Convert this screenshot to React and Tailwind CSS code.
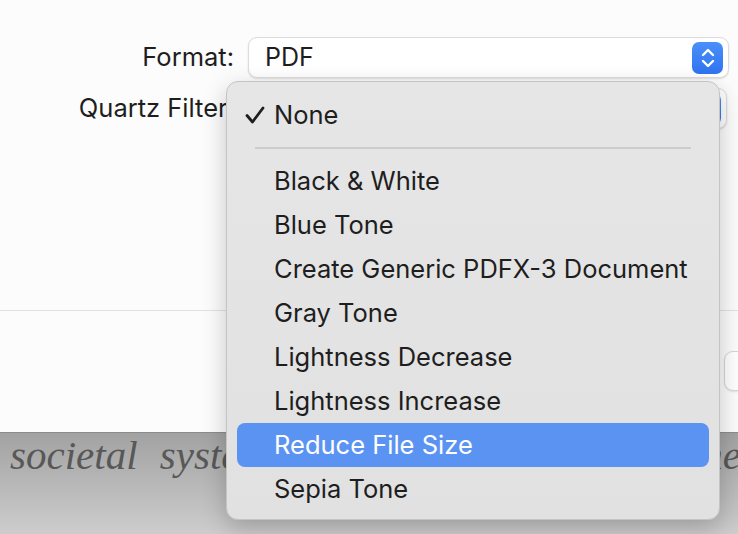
const items = [
  'Black & White',
  'Blue Tone',
  'Create Generic PDFX-3 Document',
  'Gray Tone',
  'Lightness Decrease',
  'Lightness Increase',
  'Reduce File Size',
  'Sepia Tone',
];

function Stepper() {
  return (
    <div className="w-[31px] h-[32px] rounded-[7px] bg-gradient-to-b from-[#4a8ff9] to-[#2f74f0] flex items-center justify-center shrink-0">
      <svg width="16" height="24" viewBox="0 0 16 24" fill="none" stroke="white" strokeWidth="2.4" strokeLinecap="round" strokeLinejoin="round">
        <path d="M3 9 L8 4 L13 9" />
        <path d="M3 15 L8 20 L13 15" />
      </svg>
    </div>
  );
}

function Popup({ value }) {
  return (
    <div className="h-[41px] flex-1 rounded-[9px] bg-white border border-[#dcdcdc] shadow-[0_1px_2px_rgba(0,0,0,0.12)] flex items-center justify-between pl-[16px] pr-[5px]">
      <span className="text-[25px] text-[#1e1e1e]">{value}</span>
      <Stepper />
    </div>
  );
}

export default function App() {
  return (
    <div
      className="w-[738px] h-[534px] relative overflow-hidden bg-[#fcfcfc] text-[#1e1e1e]"
      style={{ fontFamily: 'Inter, "Noto Sans", sans-serif' }}
    >
      {/* ── Print settings ── */}
      <div className="h-[311px] border-b border-[#e2e2e2] pt-[37px] pr-[9px] flex flex-col gap-[10px]">
        <div className="flex items-center">
          <span className="w-[235px] text-right text-[25.5px] pr-[1px]">Format:</span>
          <div className="w-[13px]" />
          <Popup value="PDF" />
        </div>
        <div className="flex items-center pr-[2px]">
          <span className="w-[235px] text-right text-[25.5px] whitespace-nowrap">Quartz Filter:</span>
          <div className="w-[13px]" />
          <Popup value="None" />
        </div>
      </div>

      {/* ── Footer buttons ── */}
      <div className="h-[121px] flex justify-end pt-[40px]">
        <div className="w-[40px] h-[40px] -mr-[26px] rounded-[9px] bg-white border border-[#d6d6d6] shadow-[0_1px_2px_rgba(0,0,0,0.1)]" />
      </div>

      {/* ── PDF preview ── */}
      <div className="h-[102px] border-t border-[#8c8c8c] bg-gradient-to-b from-[#a2a2a2] to-[#cdcdcd] pl-[10px]">
        <div
          className="flex items-baseline justify-between whitespace-nowrap italic text-[41px] text-[#585858] leading-[44px]"
          style={{ fontFamily: '"Liberation Serif", serif' }}
        >
          <span className="[word-spacing:12px]">societal systems and</span>
          <span className="-mr-[3px]">the</span>
        </div>
      </div>

      {/* ── Open menu ── */}
      <div className="absolute left-[226px] top-[81px] w-[494px] h-[439px] rounded-[12px] bg-gradient-to-b from-[#e6e6e6] to-[#e1e1e1] border border-[#c4c4c4] shadow-[0_8px_24px_rgba(0,0,0,0.22)] pt-[11px] px-[10px]">
        <div className="h-[44px] flex items-center">
          <span className="w-[37px] pl-[8px] flex items-center">
            <svg width="20" height="18" viewBox="0 0 20 18" fill="none" stroke="#1e1e1e" strokeWidth="2.8" strokeLinecap="round" strokeLinejoin="round">
              <path d="M2 9.5 L7.5 16 L18 2" />
            </svg>
          </span>
          <span className="text-[25.5px]">None</span>
        </div>
        <div className="h-[22px] flex items-center px-[18px]">
          <div className="h-[2px] w-full bg-[#cdcdcd]" />
        </div>
        {items.map((item) => (
          <div
            key={item}
            className={`h-[44px] flex items-center pl-[37px] rounded-[8px] text-[25.5px] ${
              item === 'Reduce File Size' ? 'bg-[#5b93f3] text-white' : ''
            }`}
          >
            {item}
          </div>
        ))}
      </div>
    </div>
  );
}
